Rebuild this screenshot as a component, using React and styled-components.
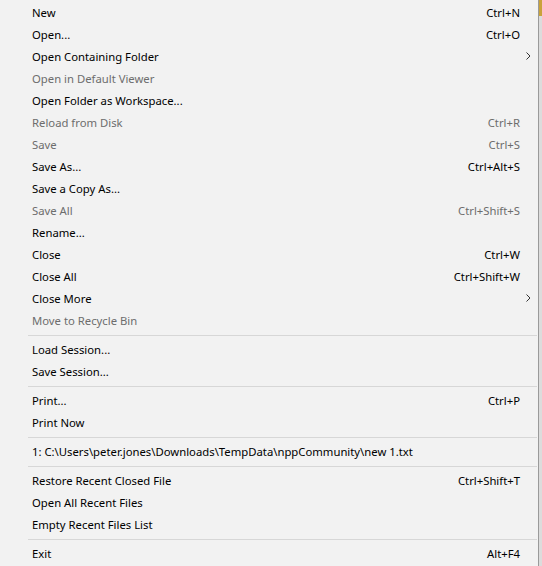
import React from 'react'
import styled, { createGlobalStyle } from 'styled-components'

const GlobalStyle = createGlobalStyle`
  html, body {
    margin: 0;
    padding: 0;
    background: #ececec;
    font-family: "Noto Sans", "Open Sans", sans-serif;
  }
`

const Screen = styled.div`
  display: flex;
  width: 542px;
  height: 566px;
  overflow: hidden;
`

const Menu = styled.div`
  width: 539px;
  height: 566px;
  box-sizing: border-box;
  padding-top: 2px;
  background: #f2f2f2;
  border-right: 1px solid #9a9a9a;
  display: flex;
  flex-direction: column;
`

const Behind = styled.div`
  flex: 1;
  background: linear-gradient(#c9a23a 0 16px, #dcdcdc 16px);
`

const Row = styled.div`
  display: grid;
  grid-template-columns: 1fr auto 18px;
  align-items: center;
  box-sizing: border-box;
  height: 22px;
  padding: 0 0 2px 32px;
  font-size: 11.3px;
  color: ${p => (p.disabled ? '#6d6d6d' : '#000')};
  white-space: nowrap;
`

const Shortcut = styled.span`
  text-align: right;
`

const Arrow = styled.span`
  display: flex;
  align-items: center;
  padding-left: 6px;
`

const Separator = styled.div`
  height: 7px;
  display: flex;
  align-items: center;
  padding-left: 28px;
  padding-right: 1px;
  &::after {
    content: '';
    flex: 1;
    height: 1px;
    background: #d7d7d7;
  }
`

const Chevron = () => (
  <svg width="5" height="8" viewBox="0 0 5 8">
    <path d="M0.5 0.5 L4 4 L0.5 7.5" fill="none" stroke="#333" strokeWidth="1" />
  </svg>
)

const items = [
  ['New', 'Ctrl+N'],
  ['Open...', 'Ctrl+O'],
  ['Open Containing Folder', '', false, true],
  ['Open in Default Viewer', '', true],
  ['Open Folder as Workspace...'],
  ['Reload from Disk', 'Ctrl+R', true],
  ['Save', 'Ctrl+S', true],
  ['Save As...', 'Ctrl+Alt+S'],
  ['Save a Copy As...'],
  ['Save All', 'Ctrl+Shift+S', true],
  ['Rename...'],
  ['Close', 'Ctrl+W'],
  ['Close All', 'Ctrl+Shift+W'],
  ['Close More', '', false, true],
  ['Move to Recycle Bin', '', true],
  '-',
  ['Load Session...'],
  ['Save Session...'],
  '-',
  ['Print...', 'Ctrl+P'],
  ['Print Now'],
  '-',
  ['1: C:\\Users\\peter.jones\\Downloads\\TempData\\nppCommunity\\new 1.txt'],
  '-',
  ['Restore Recent Closed File', 'Ctrl+Shift+T'],
  ['Open All Recent Files'],
  ['Empty Recent Files List'],
  '-',
  ['Exit', 'Alt+F4'],
]

const App = () => {
  return (
    <>
      <GlobalStyle />
      <Screen>
        <Menu>
          {items.map((item, i) =>
            item === '-' ? (
              <Separator key={i} />
            ) : (
              <Row key={i} disabled={item[2]}>
                <span>{item[0]}</span>
                <Shortcut>{item[1]}</Shortcut>
                <Arrow>{item[3] && <Chevron />}</Arrow>
              </Row>
            )
          )}
        </Menu>
        <Behind />
      </Screen>
    </>
  )
}

export default App
